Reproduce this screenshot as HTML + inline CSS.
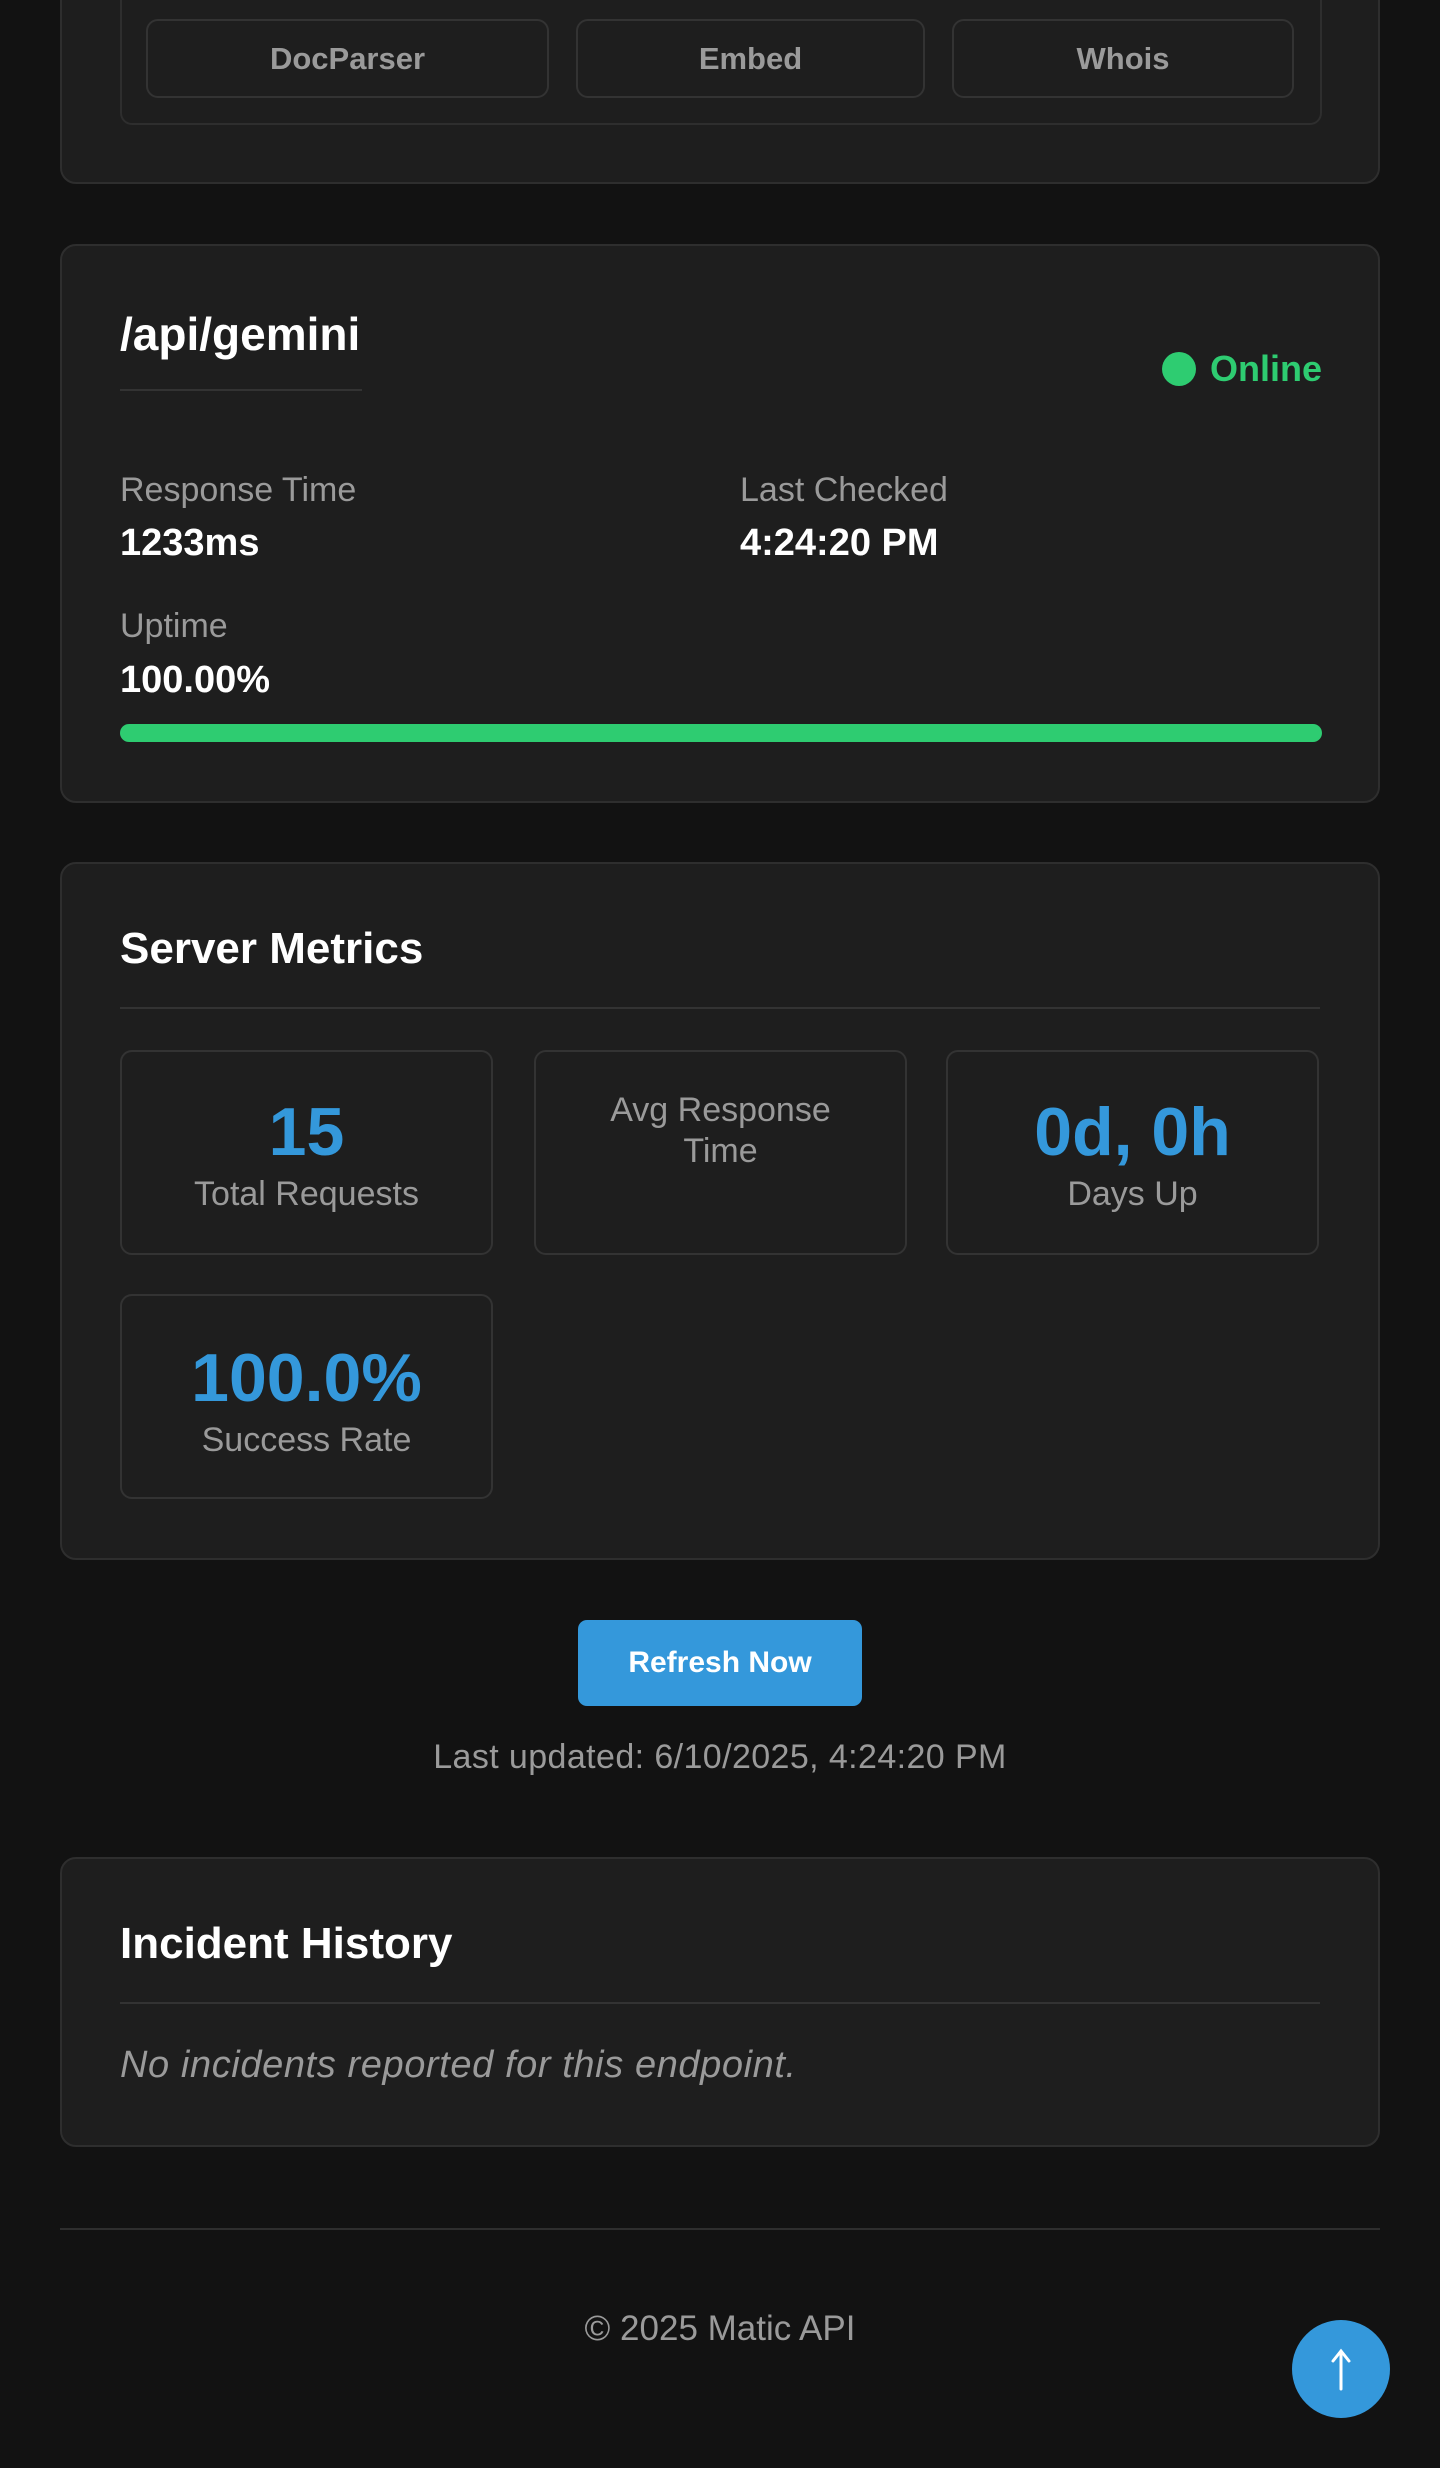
<!DOCTYPE html>
<html><head><meta charset="utf-8"><style>
*{box-sizing:border-box;margin:0;padding:0}
body{width:1440px;height:2468px;background:#121212;font-family:"Liberation Sans",sans-serif;position:relative;overflow:hidden;color:#fff}
.abs{position:absolute}
.card{position:absolute;left:60px;width:1320px;background:#1e1e1e;border:2px solid #2e2e2e;border-radius:16px}
.btn{position:absolute;top:19px;height:79px;border:2px solid #333;border-radius:12px;color:#9a9a9a;font-weight:bold;font-size:31px;display:flex;align-items:center;justify-content:center;background:#1e1e1e}
.lab{position:absolute;color:#9a9a9a;font-size:34px;line-height:38px}
.val{position:absolute;color:#fff;font-weight:bold;font-size:38px;line-height:42px}
.h{position:absolute;left:58px;font-size:44px;font-weight:bold;line-height:50px}
.line{position:absolute;left:58px;width:1200px;height:2px;background:#333}
.m{position:absolute;width:373px;height:205px;border:2px solid #333;border-radius:12px;text-align:center}
.num{position:absolute;left:0;right:0;color:#3498db;font-weight:bold;font-size:68px;line-height:80px}
.ml{position:absolute;left:0;right:0;color:#9a9a9a;font-size:34px;line-height:41px}
</style></head><body>
<div class="card" style="top:-30px;height:214px">
  <div class="abs" style="left:58px;top:0;width:1202px;height:153px;border:2px solid #2e2e2e;border-top:none;border-radius:0 0 12px 12px"></div>
</div>
<div class="btn" style="left:146px;width:403px">DocParser</div>
<div class="btn" style="left:576px;width:349px">Embed</div>
<div class="btn" style="left:952px;width:342px">Whois</div>

<div class="card" style="top:244px;height:559px">
  <div class="h" style="top:63px;font-size:46px">/api/gemini</div>
  <div class="abs" style="left:58px;top:143px;width:242px;height:2px;background:#333"></div>
  <div class="abs" style="left:1100px;top:106px;width:34px;height:34px;border-radius:50%;background:#2ecc71"></div>
  <div class="abs" style="left:1148px;top:102px;color:#2ecc71;font-weight:bold;font-size:36px;line-height:42px">Online</div>
  <div class="lab" style="left:58px;top:225px">Response Time</div>
  <div class="val" style="left:58px;top:276px">1233ms</div>
  <div class="lab" style="left:678px;top:225px">Last Checked</div>
  <div class="val" style="left:678px;top:276px">4:24:20 PM</div>
  <div class="lab" style="left:58px;top:361px">Uptime</div>
  <div class="val" style="left:58px;top:413px">100.00%</div>
  <div class="abs" style="left:58px;top:478px;width:1202px;height:18px;border-radius:9px;background:#2ecc71"></div>
</div>

<div class="card" style="top:862px;height:698px">
  <div class="h" style="top:60px">Server Metrics</div>
  <div class="line" style="top:143px"></div>
</div>
<div class="m" style="left:120px;top:1050px"><div class="num" style="top:40px">15</div><div class="ml" style="top:122px">Total Requests</div></div>
<div class="m" style="left:534px;top:1050px"><div class="ml" style="top:38px">Avg Response<br>Time</div></div>
<div class="m" style="left:946px;top:1050px"><div class="num" style="top:40px">0d, 0h</div><div class="ml" style="top:122px">Days Up</div></div>
<div class="m" style="left:120px;top:1294px"><div class="num" style="top:42px">100.0%</div><div class="ml" style="top:124px">Success Rate</div></div>

<div class="abs" style="left:578px;top:1620px;width:284px;height:86px;background:#3498db;border-radius:9px;color:#fff;font-weight:bold;font-size:30px;display:flex;align-items:center;justify-content:center">Refresh Now</div>
<div class="abs" style="left:0;width:1440px;top:1737px;text-align:center;color:#9a9a9a;font-size:34px;line-height:40px;letter-spacing:0.4px">Last updated: 6/10/2025, 4:24:20 PM</div>

<div class="card" style="top:1857px;height:290px">
  <div class="h" style="top:60px">Incident History</div>
  <div class="line" style="top:143px"></div>
  <div class="abs" style="left:58px;top:184px;color:#9a9a9a;font-style:italic;font-size:38px;line-height:44px;letter-spacing:0.6px">No incidents reported for this endpoint.</div>
</div>

<div class="abs" style="left:60px;top:2228px;width:1320px;height:2px;background:#2e2e2e"></div>
<div class="abs" style="left:0;width:1440px;top:2309px;text-align:center;color:#9a9a9a;font-size:35px;line-height:40px">© 2025 Matic API</div>
<div class="abs" style="left:1292px;top:2320px;width:98px;height:98px;border-radius:50%;background:#3498db">
  <svg width="98" height="98" viewBox="0 0 98 98"><path d="M49 69V31M41 41L49 31L57 41" stroke="#fff" stroke-width="3" fill="none" stroke-linecap="round"/></svg>
</div>
</body></html>
